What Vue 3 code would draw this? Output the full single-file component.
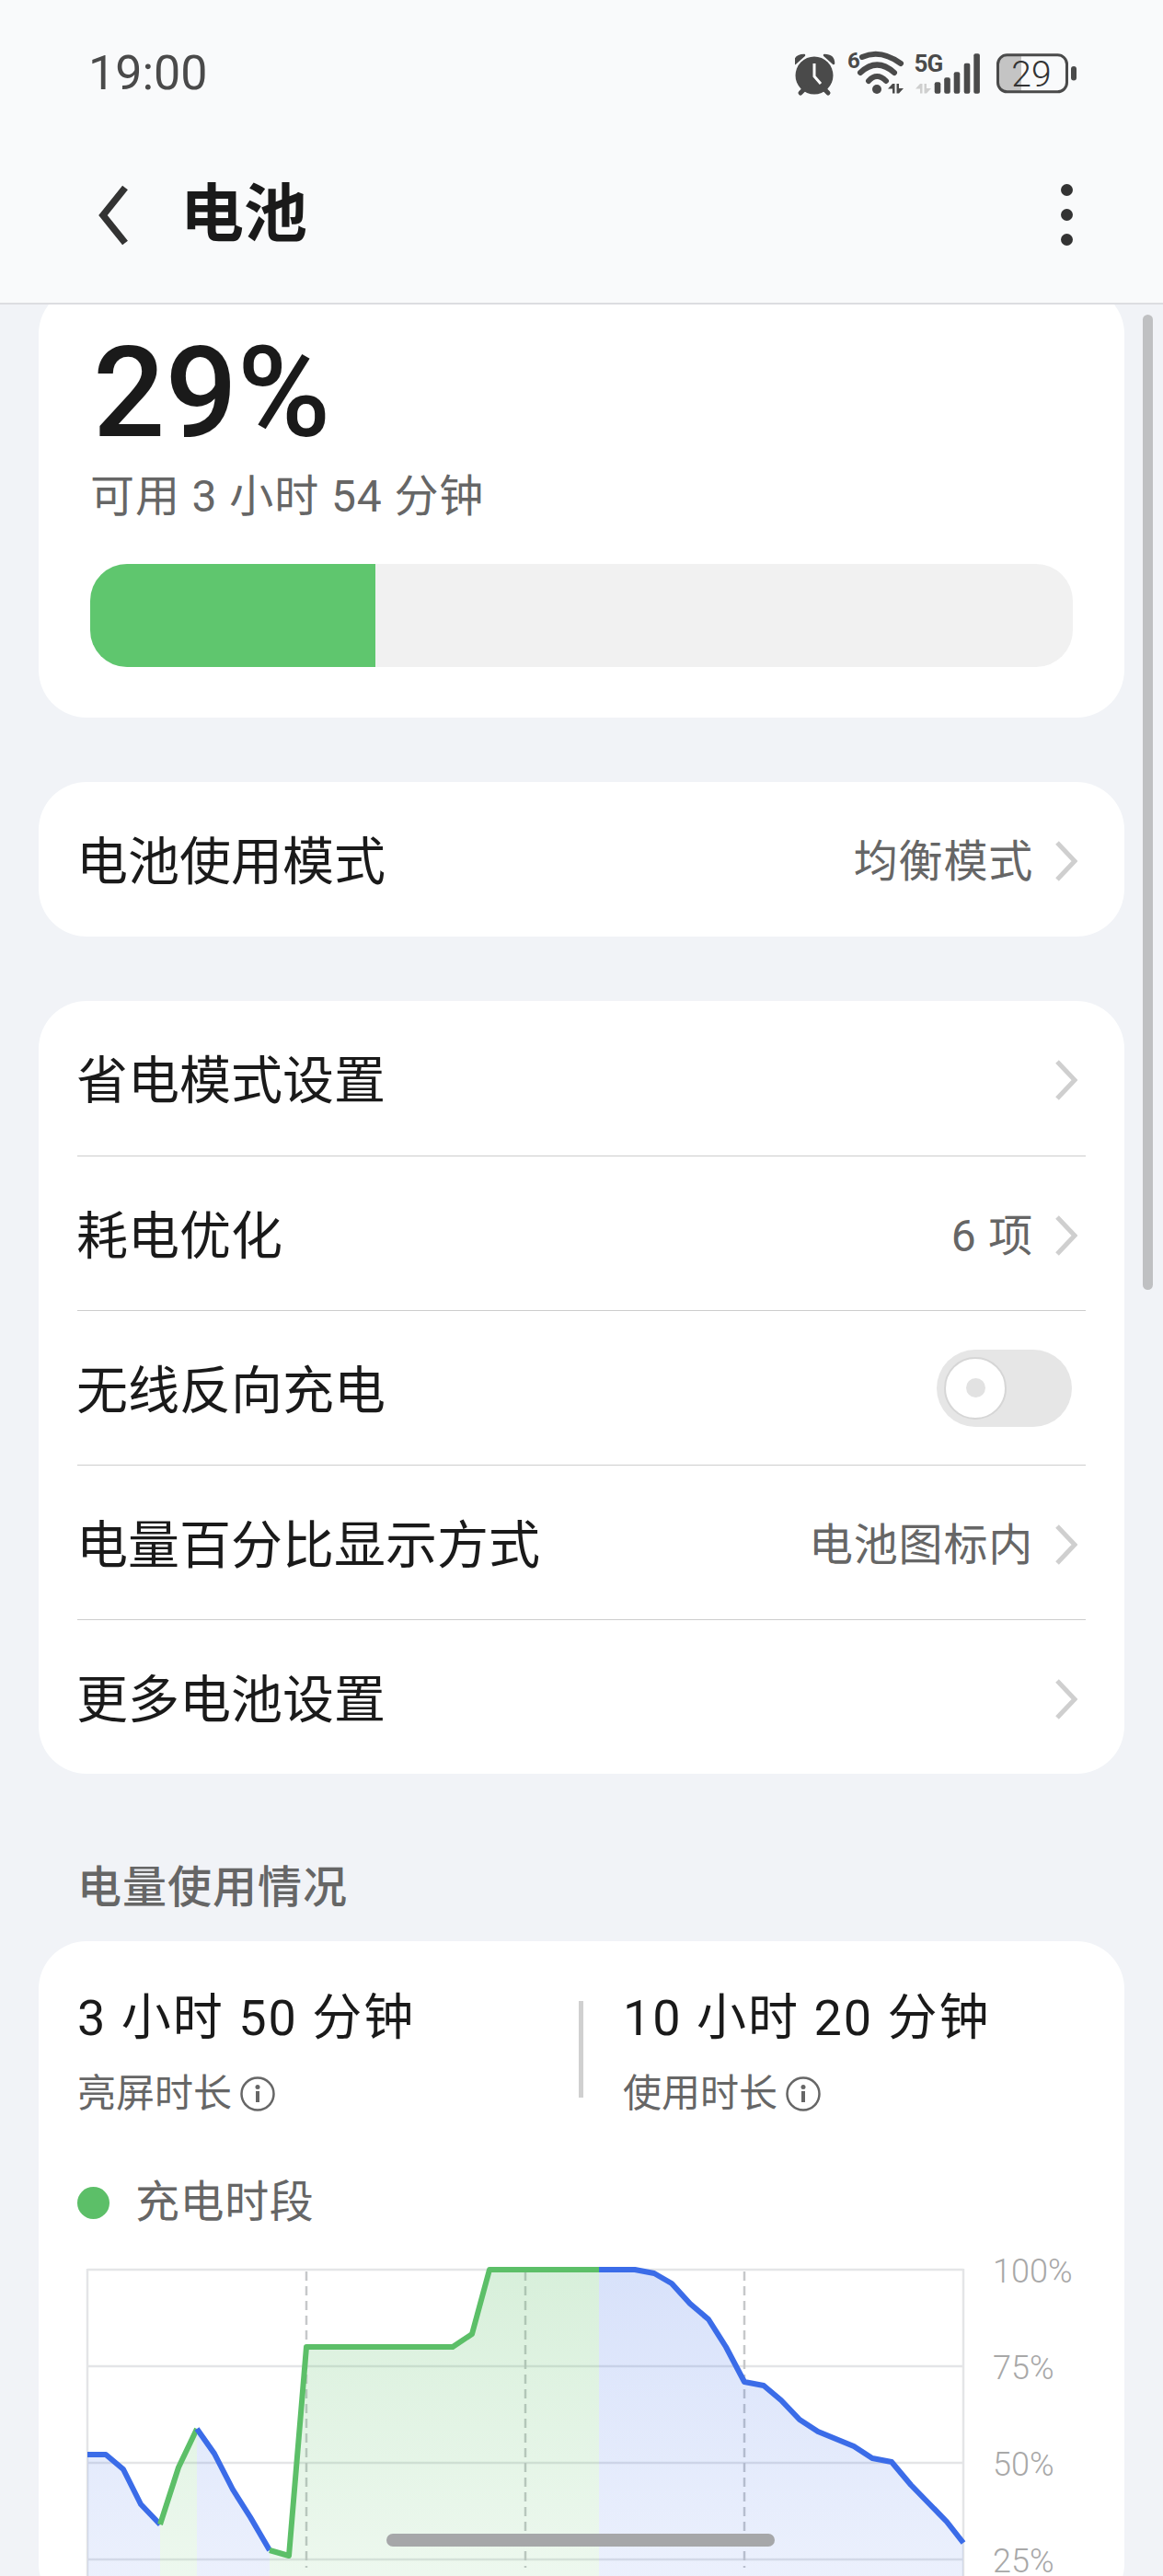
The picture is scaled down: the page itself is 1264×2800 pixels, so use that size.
<template>
  <div class="phone">
    <header class="appbar">
      <div class="status">
        <span class="time">19:00</span>
        <svg class="status-icons" width="308" height="56" viewBox="864 50 308 56">
          <!-- alarm -->
          <circle cx="885" cy="81" r="20.500" fill="#4a4a4a" />
          <path d="M864 68 Q864 59 874 59 Z M906 68 Q906 59 896 59 Z" fill="#4a4a4a" stroke="#4a4a4a" stroke-width="2.500" stroke-linejoin="round" />
          <path d="M870 100 L876 94 M900 100 L894 94" stroke="#4a4a4a" stroke-width="5" stroke-linecap="round" />
          <path d="M885 68 V82 L892 90" fill="none" stroke="#fff" stroke-width="3" />
          <!-- wifi 6 -->
          <text x="921" y="73" class="tiny">6</text>
          <path d="M937 61 Q957 52 979 68 M935 78 Q953 61 972 78 M944 87 Q953 77 963 87" fill="none" stroke="#4a4a4a" stroke-width="6" stroke-linecap="round" />
          <circle cx="953" cy="96" r="5" fill="#4a4a4a" />
          <path transform="translate(965 90)" d="M0 5.500 L5 0 H7.500 V10.500 H5 V5.500 Z M9.500 0 H12 V5 H17 L12 10.500 H9.500 Z" fill="#4a4a4a" />
          <!-- 5g -->
          <text x="993.500" y="77" class="tiny five">5G</text>
          <path transform="translate(995 90)" d="M0 5.500 L5 0 H7.500 V10.500 H5 V5.500 Z M9.500 0 H12 V5 H17 L12 10.500 H9.500 Z" fill="#cfcfcf" />
          <rect v-for="b in signal" :key="b.x" :x="b.x" :y="b.y" width="6.600" :height="100.700 - b.y" rx="2" fill="#4a4a4a" />
          <!-- battery -->
          <path d="M1094 59 H1110 V98.500 H1094 A9.500 9.500 0 0 1 1084.500 89 V68.500 A9.500 9.500 0 0 1 1094 59 Z" fill="#c4c4c4" />
          <rect x="1084.500" y="58.800" width="75" height="40" rx="10" fill="none" stroke="#4a4a4a" stroke-width="3" />
          <rect x="1164" y="71" width="6" height="15.500" rx="3" fill="#4a4a4a" />
          <text x="1121" y="93" class="batt">29</text>
        </svg>
      </div>
      <div class="titlebar">
        <svg width="40" height="70" viewBox="0 0 40 70">
          <path d="M33 5 L9 35 L33 65" fill="none" stroke="#333" stroke-width="7.500" />
        </svg>
        <h1>电池</h1>
        <div class="more"><i></i><i></i><i></i></div>
      </div>
    </header>

    <div class="scroller">
      <main class="content">
        <section class="card level">
          <div class="percent">29%</div>
          <div class="remain">可用 3 小时 54 分钟</div>
          <div class="bar"><div class="fill" :style="{ width: level + '%' }"></div></div>
        </section>

        <section class="card list">
          <div class="row">
            <span class="label">电池使用模式</span>
            <span class="value">均衡模式</span>
            <svg class="chev" width="24" height="46" viewBox="0 0 24 46"><path d="M2 3 L21 23 L2 43" /></svg>
          </div>
        </section>

        <section class="card list">
          <div class="row" v-for="r in rows" :key="r.label">
            <span class="label">{{ r.label }}</span>
            <span class="value" v-if="r.value">{{ r.value }}</span>
            <div class="switch" v-if="r.toggle"><div class="knob"><i></i></div></div>
            <svg v-else class="chev" width="24" height="46" viewBox="0 0 24 46"><path d="M2 3 L21 23 L2 43" /></svg>
          </div>
        </section>

        <h2 class="section">电量使用情况</h2>

        <section class="card usage">
          <div class="stats">
            <div class="stat first">
              <div class="num">3 小时 50 分钟</div>
              <div class="cap">亮屏时长
                <svg width="38" height="38" viewBox="0 0 38 38">
                  <circle cx="19" cy="19" r="17.500" fill="none" stroke="#666" stroke-width="2.500" />
                  <circle cx="19" cy="11.500" r="2.500" fill="#666" />
                  <rect x="17" y="16" width="4" height="12" fill="#666" />
                </svg>
              </div>
            </div>
            <div class="divider"></div>
            <div class="stat">
              <div class="num">10 小时 20 分钟</div>
              <div class="cap">使用时长
                <svg width="38" height="38" viewBox="0 0 38 38">
                  <circle cx="19" cy="19" r="17.500" fill="none" stroke="#666" stroke-width="2.500" />
                  <circle cx="19" cy="11.500" r="2.500" fill="#666" />
                  <rect x="17" y="16" width="4" height="12" fill="#666" />
                </svg>
              </div>
            </div>
          </div>

          <div class="legend"><i></i>充电时段</div>

          <!-- chart coordinates are page coordinates, the viewBox moves them into the card -->
          <svg class="chart" width="1180" height="400" viewBox="42 2440 1180 400">
            <defs>
              <linearGradient id="blueFill" gradientUnits="userSpaceOnUse" x1="0" y1="2468" x2="0" y2="2900">
                <stop offset="0" stop-color="#3b6ce8" stop-opacity="0.2" />
                <stop offset="1" stop-color="#3b6ce8" stop-opacity="0.07" />
              </linearGradient>
              <linearGradient id="greenFill" gradientUnits="userSpaceOnUse" x1="0" y1="2468" x2="0" y2="2900">
                <stop offset="0" stop-color="#5cbf68" stop-opacity="0.24" />
                <stop offset="1" stop-color="#5cbf68" stop-opacity="0.07" />
              </linearGradient>
            </defs>

            <line v-for="y in gridY" :key="y" x1="95" x2="1047" :y1="y" :y2="y" class="grid" />
            <line x1="95" x2="95" y1="2467" y2="2840" class="grid" />
            <line x1="1047" x2="1047" y1="2467" y2="2840" class="grid" />
            <line v-for="x in dashX" :key="x" :x1="x" :x2="x" y1="2470" y2="2792" class="dash" />

            <template v-for="(s, i) in segments" :key="i">
              <polygon :points="areaPoints(s.pts)" :fill="s.charging ? 'url(#greenFill)' : 'url(#blueFill)'" />
            </template>
            <template v-for="(s, i) in segments" :key="'l' + i">
              <polyline :points="linePoints(s.pts)" fill="none" :stroke="s.charging ? '#5cbf68' : '#3b6ce8'" stroke-width="6" stroke-linejoin="round" />
            </template>

            <text v-for="(t, i) in yLabels" :key="t" x="1079" :y="gridY[i] + 14" class="axis">{{ t }}</text>
          </svg>
        </section>
      </main>
    </div>

    <div class="scrollbar"></div>
    <div class="home"></div>
  </div>
</template>

<script setup>
const level = 29;

const signal = [
  { x: 1015.7, y: 88.3 },
  { x: 1026.2, y: 83.3 },
  { x: 1036.7, y: 77.3 },
  { x: 1047.7, y: 67.7 },
  { x: 1058.3, y: 57.3 },
];

const rows = [
  { label: "省电模式设置" },
  { label: "耗电优化", value: "6 项" },
  { label: "无线反向充电", toggle: true },
  { label: "电量百分比显示方式", value: "电池图标内" },
  { label: "更多电池设置" },
];

const gridY = [2468, 2573, 2678, 2783];
const dashX = [333, 571, 809];
const yLabels = ["100%", "75%", "50%", "25%"];

// read off the reference, x/y in page pixels
const segments = [
  { charging: false, pts: [[95, 2669], [115, 2669], [134, 2685], [153, 2723], [174, 2745]] },
  { charging: true, pts: [[174, 2745], [194, 2683], [214, 2641]] },
  { charging: false, pts: [[214, 2641], [233, 2668], [253, 2707], [272, 2737], [293, 2773]] },
  { charging: true, pts: [[293, 2773], [314, 2779], [333, 2552], [492, 2552], [513, 2538], [532, 2468], [651, 2468]] },
  {
    charging: false,
    pts: [
      [651, 2468], [690, 2468], [711, 2472], [730, 2483], [750, 2505], [770, 2522], [789, 2552], [809, 2590],
      [830, 2594], [849, 2610], [869, 2631], [889, 2644], [928, 2660], [948, 2673], [969, 2677], [990, 2702],
      [1029, 2742], [1047, 2765],
    ],
  },
];

function linePoints(pts) {
  return pts.map((p) => p.join(",")).join(" ");
}

function areaPoints(pts) {
  const first = pts[0][0];
  const last = pts[pts.length - 1][0];
  return linePoints(pts) + ` ${last},2840 ${first},2840`;
}
</script>

<style scoped>
.phone {
  position: relative;
  width: 1264px;
  height: 2800px;
  overflow: hidden;
  background: #f1f3f7;
  font-family: Roboto, "Noto Sans CJK SC", sans-serif;
  color: #1a1a1a;
}

.appbar {
  height: 331px;
  box-sizing: border-box;
  background: #f9fafb;
  border-bottom: 2px solid #dcdde1;
}

.status {
  height: 158px;
  padding: 0 92px 0 96px;
  display: flex;
  align-items: center;
  justify-content: space-between;
}

.time {
  font-size: 52px;
  color: #4a4a4a;
}

.status-icons {
  display: block;
  margin-top: -1px;
}

.tiny {
  font-family: Roboto, sans-serif;
  font-size: 24px;
  font-weight: 700;
  fill: #4a4a4a;
}

.five {
  font-size: 26px;
  letter-spacing: -1px;
}

.batt {
  font-family: Roboto, sans-serif;
  font-size: 39px;
  font-weight: 300;
  fill: #333;
  text-anchor: middle;
}

.titlebar {
  height: 150px;
  padding: 2px 98px 0 103px;
  box-sizing: border-box;
  display: flex;
  align-items: center;
}

.titlebar h1 {
  margin: 0 0 0 53px;
  font-size: 69px;
  line-height: 80px;
  font-weight: 700;
  flex: 1;
}

.more {
  display: flex;
  flex-direction: column;
  gap: 14px;
  margin-top: -2px;
}

.more i {
  display: block;
  width: 13px;
  height: 13px;
  border-radius: 50%;
  background: #333;
}

.scroller {
  height: 2469px;
  overflow: hidden;
}

.content {
  margin-top: -20px;
  padding: 0 42px;
}

.card {
  width: 1180px;
  background: #fff;
  border-radius: 52px;
  overflow: hidden;
}

.level {
  padding: 44px 56px 55px;
  box-sizing: border-box;
}

.percent {
  margin: 2px 0 -2px 3px;
  font-size: 138px;
  line-height: 140px;
  font-weight: 500;
}

.remain {
  margin-top: 15px;
  margin-bottom: -2px;
  font-size: 48px;
  line-height: 60px;
  color: #666;
  letter-spacing: 0.9px;
}

.bar {
  margin-top: 45px;
  height: 112px;
  border-radius: 40px;
  background: #f1f1f1;
  overflow: hidden;
}

.fill {
  height: 100%;
  background: #5fc66e;
}

.list {
  margin-top: 70px;
  padding: 0 42px;
  box-sizing: border-box;
}

.row {
  height: 168px;
  box-sizing: border-box;
  padding-right: 9px;
  display: flex;
  align-items: center;
}

.row + .row {
  border-top: 1px solid #cdcdcd;
}

.label {
  flex: 1;
  margin: 6px 0 0 -1px;
  font-size: 56px;
  line-height: 70px;
}

.value {
  margin: 6px 24px 0 0;
  font-size: 48px;
  line-height: 60px;
  letter-spacing: 0.8px;
  color: #666;
}

.chev {
  display: block;
  margin-top: 4px;
}

.chev path {
  fill: none;
  stroke: #cfcfcf;
  stroke-width: 5;
}

.switch {
  width: 147px;
  height: 84px;
  margin-right: 6px;
  border-radius: 42px;
  background: #e6e6e6;
  display: flex;
  align-items: center;
  padding-left: 8px;
  box-sizing: border-box;
}

.knob {
  width: 68px;
  height: 68px;
  box-sizing: border-box;
  border: 2px solid #d6d6d6;
  border-radius: 50%;
  background: #fff;
  display: flex;
  align-items: center;
  justify-content: center;
}

.knob i {
  display: block;
  width: 21px;
  height: 21px;
  border-radius: 50%;
  background: #e2e2e2;
}

.section {
  margin: 94px 0 28px;
  padding-left: 42px;
  font-size: 48px;
  line-height: 60px;
  font-weight: 500;
  letter-spacing: 1px;
  color: #666;
}

.usage {
  padding-top: 52px;
}

.stats {
  display: flex;
  padding: 0 42px;
}

.stat.first {
  width: 545px;
}

.divider {
  width: 5px;
  height: 105px;
  margin: 13px 43px 0 0;
  background: #d0d0d0;
}

.num {
  font-size: 54px;
  line-height: 64px;
  letter-spacing: 2px;
}

.cap {
  margin-top: 25px;
  display: flex;
  align-items: center;
  gap: 9px;
  font-size: 42px;
  line-height: 50px;
  color: #666;
}

.legend {
  margin-top: 63px;
  padding-left: 42px;
  display: flex;
  align-items: center;
  font-size: 48px;
  line-height: 60px;
  letter-spacing: 0.6px;
  color: #666;
}

.legend i {
  display: block;
  width: 35px;
  height: 35px;
  margin-right: 28px;
  border-radius: 50%;
  background: #5cbf68;
}

.chart {
  display: block;
  margin-top: 15px;
}

.grid {
  stroke: #e4e5e7;
  stroke-width: 2.500;
}

.dash {
  stroke: #c6c8ca;
  stroke-width: 2.500;
  stroke-dasharray: 10 6;
}

.axis {
  font-family: Roboto, sans-serif;
  font-size: 36px;
  font-weight: 300;
  fill: #a8a8a8;
}

.scrollbar {
  position: absolute;
  left: 1242px;
  top: 342px;
  width: 11px;
  height: 1060px;
  border-radius: 6px;
  background: #bfc0c2;
}

.home {
  position: absolute;
  left: 420px;
  top: 2754px;
  width: 422px;
  height: 14px;
  border-radius: 7px;
  background: #a6a7a9;
}
</style>

<style>
html,
body {
  margin: 0;
  background: #f1f3f7;
}
</style>
